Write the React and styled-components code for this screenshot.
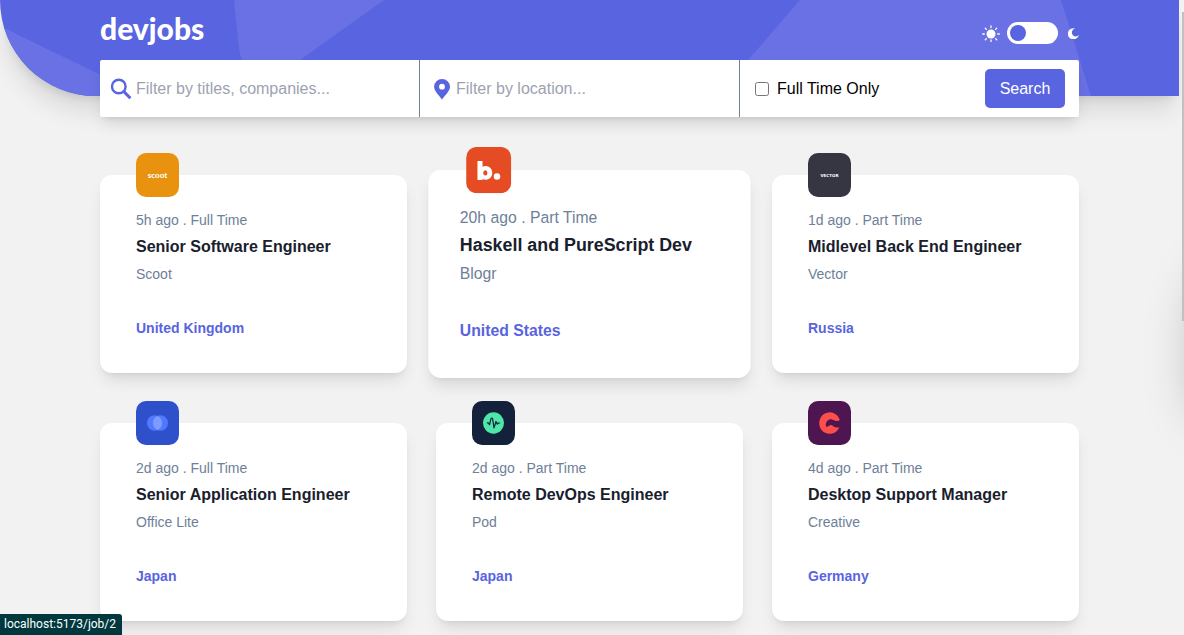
import React, { useState } from "react";
import styled, { createGlobalStyle, css } from "styled-components";

const GlobalStyle = createGlobalStyle`
  *, *::before, *::after { box-sizing: border-box; }
  html, body { margin: 0; height: 100%; overflow: hidden; background: #f2f2f2; }
  body { font-family: "Liberation Sans", Arial, sans-serif; font-size: 16px; line-height: 24px; color: #19202d; }
  #root { min-height: 100%; }
  h1, h2, p { margin: 0; }
`;

const violet = "#5964e0";
const gray = "#6e8098";
const cardShadow = "0 10px 15px -3px rgba(0,0,0,.1), 0 4px 6px -4px rgba(0,0,0,.1)";

const Page = styled.div`
  position: relative;
  height: 100vh;
  overflow: hidden;
  padding-right: 5px;
`;

const Header = styled.header`
  position: relative;
  height: 96px;
  padding: 0 100px;
  background: ${violet};
  border-bottom-left-radius: 100px;
  box-shadow: 0 20px 25px -5px rgba(0,0,0,.1), 0 8px 10px -6px rgba(0,0,0,.1);
`;

const Pattern = styled.svg`
  position: absolute;
  inset: 0;
  width: 100%;
  height: 100%;
  border-bottom-left-radius: 100px;
`;

const TopRow = styled.div`
  position: relative;
  display: flex;
  justify-content: space-between;
  align-items: flex-start;
  height: 60px;
`;

const Logo = styled.h1`
  padding-top: 12px;
  font-family: Lato, sans-serif;
  font-size: 30px;
  line-height: 32px;
  font-weight: 900;
  color: #fff;
`;

const ThemeSwitch = styled.label`
  display: flex;
  align-items: center;
  padding-top: 22px;
  gap: 7px;
`;

const Toggle = styled.input`
  appearance: none;
  display: flex;
  align-items: center;
  width: 51px;
  height: 22px;
  margin: 0;
  padding: 0 3px;
  border-radius: 11px;
  background: #fff;
  cursor: pointer;
  &::before {
    content: "";
    width: 16px;
    height: 16px;
    border-radius: 8px;
    background: ${violet};
    margin-left: ${(p) => (p.checked ? "29px" : "0")};
  }
`;

const MoonIcon = styled.svg`
  margin-left: 3px;
`;

const SearchBar = styled.form`
  position: relative;
  display: grid;
  grid-template-columns: 320fr 320fr 339fr;
  height: 57px;
  background: #fff;
  border-radius: 2px;
  box-shadow: ${cardShadow};
`;

const Field = styled.label`
  display: flex;
  align-items: center;
  gap: 4px;
  min-width: 0;
  padding: 0 10px;
  border-right: 1px solid ${gray};
`;

const TextInput = styled.input`
  flex: 1;
  min-width: 0;
  padding: 0;
  border: 0;
  outline: 0;
  background: transparent;
  font: inherit;
  color: #19202d;
  &::placeholder { color: #9ca3af; opacity: 1; }
`;

const SubmitGroup = styled.div`
  display: flex;
  align-items: center;
  justify-content: space-between;
  padding: 0 14px 0 15px;
`;

const CheckLabel = styled.label`
  display: flex;
  align-items: center;
  gap: 8px;
  color: #000;
`;

const Checkbox = styled.input`
  width: 14px;
  height: 14px;
  margin: 0;
`;

const SearchButton = styled.button`
  width: 80px;
  height: 39px;
  padding: 0;
  border: 0;
  border-radius: 5px;
  background: ${violet};
  color: #fff;
  font: inherit;
`;

const JobGrid = styled.main`
  display: grid;
  grid-template-columns: repeat(3, 1fr);
  gap: 50px 29px;
  padding: 79px 100px 0;
`;

const raised = css`
  transform: scale(1.05);
`;

const Card = styled.a`
  position: relative;
  height: 198px;
  padding: 33px ${(p) => (p.$active ? "30px" : "36px")} 0;
  border-radius: 12px;
  background: #fff;
  box-shadow: ${cardShadow};
  color: inherit;
  text-decoration: none;
  ${(p) => p.$active && raised}
  &:hover { ${raised} }
`;

const Badge = styled.svg`
  position: absolute;
  left: 36px;
  top: -22px;
  width: 43px;
  height: 44px;
`;

const Meta = styled.p`
  font-size: ${(p) => (p.$active ? "15px" : "14px")};
  line-height: 24px;
  color: ${gray};
`;

const Title = styled.h2`
  margin: 2px 0;
  font-size: ${(p) => (p.$active ? "17px" : "16px")};
  line-height: 26px;
  font-weight: 700;
`;

const Country = styled.p`
  margin-top: 30px;
  font-size: ${(p) => (p.$active ? "15px" : "14px")};
  line-height: 24px;
  font-weight: 700;
  color: ${violet};
`;

const ScrollThumb = styled.div`
  position: absolute;
  right: 0;
  top: 12px;
  width: 2px;
  height: 309px;
  background: #c1c1c1;
`;

const Drawer = styled.aside`
  position: absolute;
  left: 100%;
  top: 210px;
  width: 200px;
  height: 190px;
  border-radius: 90px 0 0 20px;
  box-shadow: 0 25px 50px -12px rgba(0,0,0,.25);
`;

const StatusBar = styled.div`
  position: absolute;
  left: 0;
  bottom: 0;
  height: 21px;
  padding: 0 6px 0 4px;
  border-top-right-radius: 3px;
  background: #00383d;
  color: #fff;
  font-family: Roboto, sans-serif;
  font-size: 12px;
  line-height: 21px;
`;

const logos = {
  scoot: {
    color: "#e99210",
    art: <text x="21.5" y="24" textAnchor="middle" fill="#fff" fontFamily="Lato, sans-serif" fontWeight="900" fontSize="8">scoot</text>,
  },
  blogr: {
    color: "#e64c24",
    art: (
      <g fill="#fff">
        <path fillRule="evenodd" d="M10.8 13h4.800v5.500a6.400 6.400 0 1 1 0 11.400v.8h-4.800zM18.300 21.800a2 2.400 0 1 0 0 4.800 2 2.400 0 0 0 0-4.800z" />
        <circle cx="29.400" cy="27.500" r="3.100" />
      </g>
    ),
  },
  vector: {
    color: "#363643",
    art: <text x="21.5" y="23" textAnchor="middle" fill="#fff" fontFamily="DejaVu Sans, sans-serif" fontWeight="700" fontSize="4">VECTOR</text>,
  },
  office: {
    color: "#2f50cb",
    art: (
      <g>
        <circle cx="18.5" cy="21.5" r="7.5" fill="#5079ff" />
        <circle cx="24.5" cy="21.5" r="7.5" fill="#5079ff" />
        <path d="M21.5 14.600a7.500 7.500 0 0 1 0 13.800 7.500 7.500 0 0 1 0-13.800z" fill="#7e9bff" />
      </g>
    ),
  },
  pod: {
    color: "#14213a",
    art: (
      <g>
        <circle cx="21.5" cy="21.5" r="10.5" fill="#4fe6a9" />
        <path d="M15.300 21.300h.9l1.300 1.900L19 17.200q.8-1 1.600 0L22 26.300 24 20l1.300 2.600 1-1.100h1.400" fill="none" stroke="#14213a" strokeWidth="1.200" strokeLinecap="round" strokeLinejoin="round" />
      </g>
    ),
  },
  creative: {
    color: "#4d1650",
    art: <path d="M31.800 18.800A10.500 10.500 0 1 0 31.400 25.600C29 26.200 27 25.800 25.500 24.800C24 23.200 22 23.200 20.800 24.400C19.600 25.400 18 25.300 17.800 24.200C17.600 20 20.500 17.400 24 18C27 18.800 28.500 20.500 31.800 18.800z" fill="#fe4e4b" />,
  },
};

const jobs = [
  { id: 1, logo: "scoot", meta: "5h ago . Full Time", title: "Senior Software Engineer", company: "Scoot", country: "United Kingdom" },
  { id: 2, logo: "blogr", meta: "20h ago . Part Time", title: "Haskell and PureScript Dev", company: "Blogr", country: "United States", active: true },
  { id: 3, logo: "vector", meta: "1d ago . Part Time", title: "Midlevel Back End Engineer", company: "Vector", country: "Russia" },
  { id: 4, logo: "office", meta: "2d ago . Full Time", title: "Senior Application Engineer", company: "Office Lite", country: "Japan" },
  { id: 5, logo: "pod", meta: "2d ago . Part Time", title: "Remote DevOps Engineer", company: "Pod", country: "Japan" },
  { id: 6, logo: "creative", meta: "4d ago . Part Time", title: "Desktop Support Manager", company: "Creative", country: "Germany" },
];

function JobCard({ job }) {
  const logo = logos[job.logo];
  const { active } = job;
  return (
    <Card href={`/job/${job.id}`} $active={active}>
      <Badge viewBox="0 0 43 43" preserveAspectRatio="none" aria-hidden="true">
        <rect width="43" height="43" rx="10" fill={logo.color} />
        {logo.art}
      </Badge>
      <Meta $active={active}>{job.meta}</Meta>
      <Title $active={active}>{job.title}</Title>
      <Meta $active={active}>{job.company}</Meta>
      <Country $active={active}>{job.country}</Country>
    </Card>
  );
}

export default function App() {
  const [dark, setDark] = useState(false);
  return (
    <Page>
      <GlobalStyle />
      <Header>
        <Pattern viewBox="0 0 1179 96" preserveAspectRatio="none" aria-hidden="true">
          <g fill="#6971e4">
            <path d="M0 26 144 96H0z" />
            <path d="M234 0h150L300 60l-40 24Q240 70 238 40z" />
            <path d="M800 0h261l30 96H717z" />
          </g>
        </Pattern>
        <TopRow>
          <Logo>devjobs</Logo>
          <ThemeSwitch aria-label="Dark mode">
            <svg width="18" height="18" viewBox="0 0 18 18" aria-hidden="true">
              <circle cx="9" cy="10" r="4.500" fill="#fff" />
              <path d="M9 2v1.500M9 16v1.500M.7 10h1.600M15.700 10h1.600M3.300 4.300l1.100 1.100M13.600 14.600l1.100 1.100M3.300 15.700l1.100-1.100M13.600 5.400l1.100-1.100" stroke="#fff" strokeWidth="1.300" strokeLinecap="round" />
            </svg>
            <Toggle type="checkbox" role="switch" checked={dark} onChange={(e) => setDark(e.target.checked)} />
            <MoonIcon width="11" height="12" viewBox="0 0 11 12" aria-hidden="true">
              <path d="M7.400 1.600A3.900 3.900 0 1 0 10.900 7.800 5.600 5.500 0 1 1 7.400 1.600z" fill="#fff" />
            </MoonIcon>
          </ThemeSwitch>
        </TopRow>
        <SearchBar onSubmit={(e) => e.preventDefault()}>
          <Field>
            <svg width="22" height="22" viewBox="0 0 22 22" fill="none" stroke={violet} aria-hidden="true">
              <circle cx="8.800" cy="8.500" r="6.800" strokeWidth="2.400" />
              <path d="M13.600 13.400l6.800 6.900" strokeWidth="3" />
            </svg>
            <TextInput aria-label="Filter by titles, companies" placeholder="Filter by titles, companies..." />
          </Field>
          <Field>
            <svg width="22" height="22" viewBox="0 0 22 22" aria-hidden="true">
              <path fillRule="evenodd" d="M12 1a7.900 7.700 0 0 0-7.900 7.700C4.100 13 8.500 16.500 12 21.500 15.500 16.500 20 13 20 8.700A7.900 7.700 0 0 0 12 1zm0 4.800a2.900 2.900 0 1 1 0 5.800 2.900 2.900 0 0 1 0-5.800z" fill={violet} />
            </svg>
            <TextInput aria-label="Filter by location" placeholder="Filter by location..." />
          </Field>
          <SubmitGroup>
            <CheckLabel>
              <Checkbox type="checkbox" />
              Full Time Only
            </CheckLabel>
            <SearchButton type="submit">Search</SearchButton>
          </SubmitGroup>
        </SearchBar>
      </Header>
      <JobGrid>
        {jobs.map((job) => (
          <JobCard key={job.id} job={job} />
        ))}
      </JobGrid>
      <Drawer aria-hidden="true" />
      <ScrollThumb />
      <StatusBar>localhost:5173/job/2</StatusBar>
    </Page>
  );
}
